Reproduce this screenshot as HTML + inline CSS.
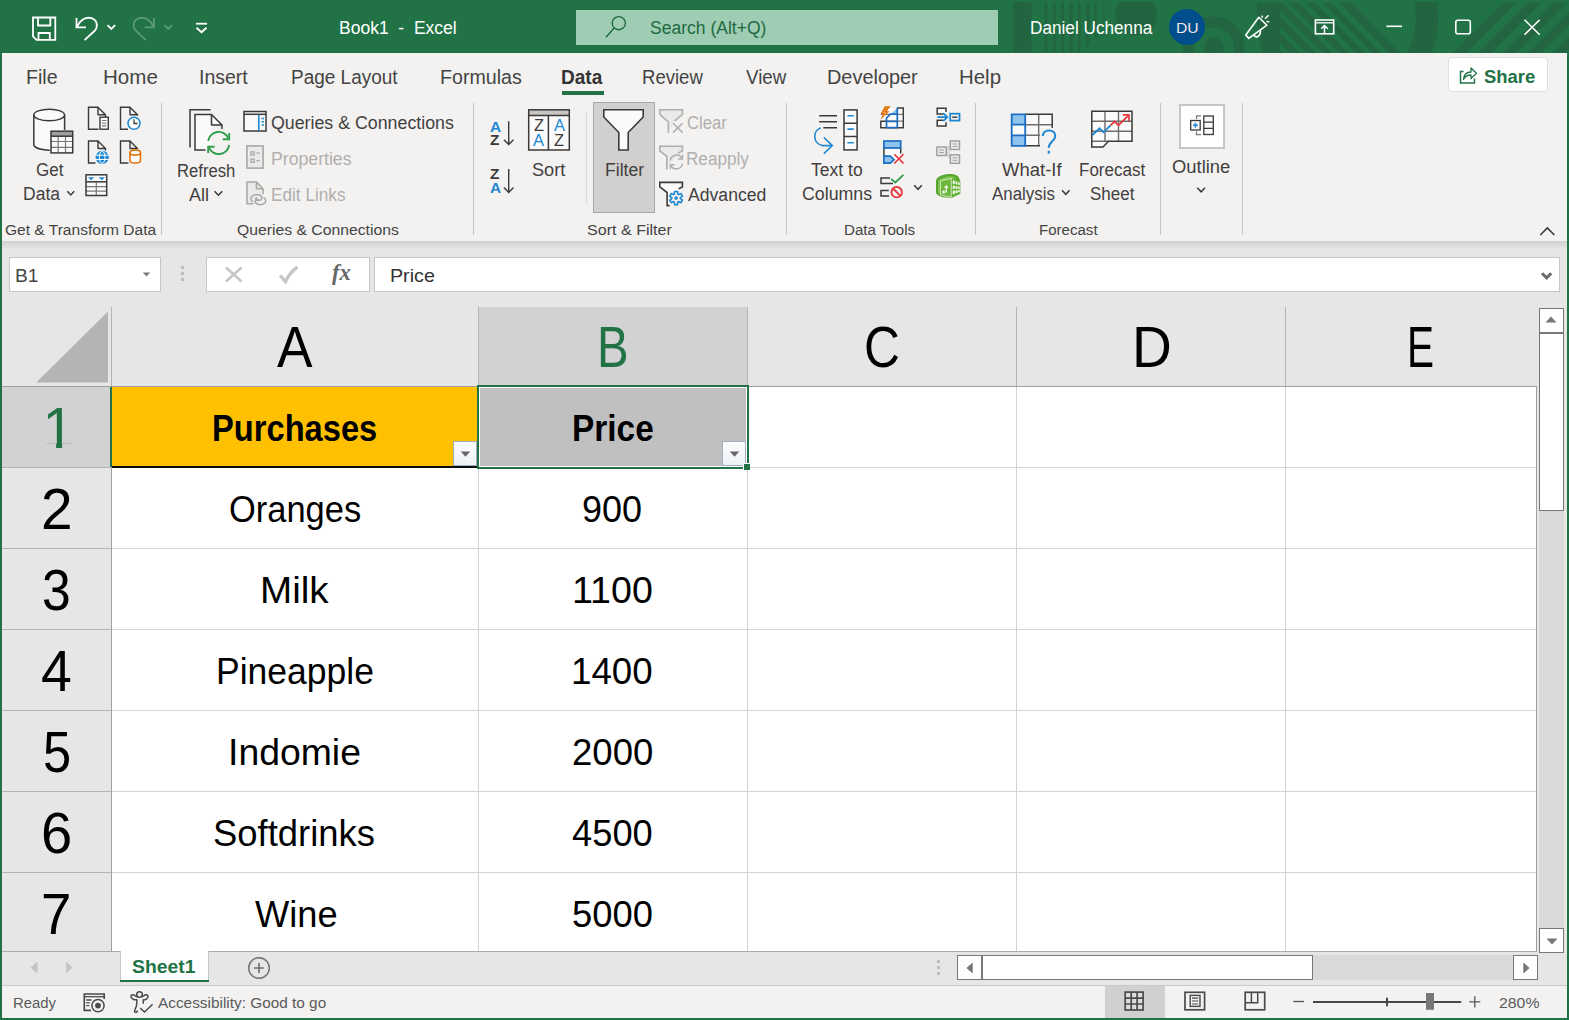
<!DOCTYPE html>
<html lang="en"><head><meta charset="utf-8"><title>Book1 - Excel</title>
<style>
html,body{margin:0;padding:0}
body{width:1569px;height:1020px;overflow:hidden;position:relative;background:#e6e6e6;font-family:"Liberation Sans",sans-serif}
.a{position:absolute}
.t{position:absolute;white-space:pre;line-height:1;transform-origin:0 0;display:block}
svg{position:absolute;overflow:visible}
#win{left:0;top:0;width:1569px;height:1020px;background:#217346}
#title{left:0;top:0;width:1569px;height:53px;background:#217346;overflow:hidden}
#tabs{left:2px;top:53px;width:1565px;height:47px;background:#f3f2f1}
#ribbon{left:2px;top:100px;width:1565px;height:141px;background:#f3f2f1}
#rshadow{left:2px;top:241px;width:1565px;height:8px;background:linear-gradient(#d0d0d0,#e6e6e6)}
#fbar{left:2px;top:249px;width:1565px;height:58px;background:#e6e6e6}
.box{position:absolute;background:#fff;border:1px solid #c6c6c6;box-sizing:border-box}
.sep{position:absolute;width:1px;background:#c8c6c4;top:103px;height:132px}
#grid{left:2px;top:307px;width:1535px;height:644px;background:#fff;overflow:hidden}
.ch{position:absolute;top:0;height:79px;background:#e6e6e6;box-sizing:border-box;border-right:1px solid #b8b8b8}
.rh{position:absolute;left:0;width:109px;background:#e6e6e6;box-sizing:border-box;border-bottom:1px solid #b8b8b8}
.vl{position:absolute;width:1px;background:#d4d4d4;top:80px;height:564px}
.hl{position:absolute;height:1px;background:#d4d4d4;left:110px;width:1425px}
</style></head><body>
<div id="win" class="a"></div>

<div id="title" class="a">
<svg width="1569" height="53" viewBox="0 0 1569 53" style="left:0;top:0">
<g fill="#236540">
<rect x="1013.300" y="2" width="18.200" height="50"/>
<rect x="1044.700" y="2" width="2.600" height="50"/><rect x="1053" y="2" width="2.600" height="50"/><rect x="1061.300" y="2" width="2.600" height="50"/><rect x="1069.600" y="2" width="3.200" height="50"/><rect x="1077.900" y="2" width="2.600" height="50"/><path d="M1086.200 3 h3.300 v39 l-3.300 6 z"/><rect x="1094.400" y="2" width="2.600" height="37"/><rect x="1102.700" y="2" width="1.800" height="20" opacity="0.6"/>
<circle cx="1136" cy="14.500" r="21"/>
<circle cx="1213.800" cy="47.600" r="10"/>
<path d="M1414.500 2 H1437.600 Q1441 30 1432 53 H1407 Q1419 30 1414.500 2 Z"/>
</g>
<g fill="none" stroke="#236540">
<circle cx="1213.800" cy="47.600" r="25.600" stroke-width="10.800"/>

</g>
<clipPath id="cpx"><rect x="1280" y="0" width="300" height="53"/></clipPath>
<path d="M1257 3 H1352 L1400 53 H1263 Q1255 28 1257 3 Z" fill="#236540"/>
<path d="M1232.7 3 H1240.2 L1290.2 53 H1282.7 Z M1249.2 3 H1256.7 L1306.7 53 H1299.2 Z M1265.7 3 H1273.2 L1323.2 53 H1315.7 Z M1282.2 3 H1289.7 L1339.7 53 H1332.2 Z M1298.7 3 H1306.2 L1356.2 53 H1348.7 Z M1315.2 3 H1322.7 L1372.7 53 H1365.2 Z M1331.7 3 H1339.2 L1389.2 53 H1381.7 Z " fill="#217346" clip-path="url(#cpx)"/>
<path d="M1453 53 H1466 L1516 3 H1503 Z M1478 53 H1491 L1541 3 H1528 Z M1503 53 H1516 L1566 3 H1553 Z M1528 53 H1541 L1591 3 H1578 Z M1553 53 H1566 L1616 3 H1603 Z " fill="#236540"/>
<rect x="0" y="0" width="1569" height="2" fill="#217346"/>
</svg>
<svg width="260" height="53" viewBox="0 0 260 53" style="left:0;top:0" fill="none" stroke="#fff" stroke-width="1.8">
<path d="M33 17.5 H55.3 V39.8 H36.5 L33 36.3 Z"/><path d="M38 17.5 V25.5 H50.3 V17.5"/><path d="M38.5 39.8 V33 H49.8 V39.8"/>
<path d="M76.5 18 V27.3 H86"/><path d="M77 27 C80 20 86 16.5 91.5 18.2 C97 20 98.5 26 95 30.5 L84.5 40.2" stroke-linejoin="round"/>
<path d="M107.5 25.2 L111.3 29 L115.1 25.2"/>
<g stroke="#5a9a76"><path d="M154 18 V27.3 H144.5"/><path d="M153.5 27 C150.5 20 144.5 16.5 139 18.2 C133.5 20 132 26 135.500 30.5 L146 40.2"/>
<path d="M164.5 25.200 L168.3 29 L172.1 25.2"/></g>
<path d="M196 23.7 H207"/><path d="M196.500 27.8 L201.5 32.2 L206.5 27.8"/>
</svg>
<span class="t " style="left:339.40px;top:19.00px;font-size:18px;color:#fff;transform:scaleX(0.9726);">Book1  -  Excel</span>
<div class="a" style="left:576px;top:10px;width:422px;height:35px;background:#9fcdb3"></div>
<svg width="30" height="30" viewBox="0 0 30 30" style="left:603px;top:12px" fill="none" stroke="#1e6a41" stroke-width="1.400"><circle cx="15.800" cy="11.200" r="6.600"/><path d="M11.200 16 L3 25.300"/></svg>
<span class="t " style="left:649.71px;top:19.00px;font-size:18px;color:#1e6a41;transform:scaleX(0.9734);">Search (Alt+Q)</span>
<span class="t " style="left:1030.13px;top:19.00px;font-size:18px;color:#fff;transform:scaleX(0.9544);">Daniel Uchenna</span>
<div class="a" style="left:1169px;top:9px;width:36px;height:36px;border-radius:50%;background:#004e8c"></div>
<span class="t " style="left:1175.75px;top:20.50px;font-size:14.5px;color:#f3e4e4;transform:scaleX(1.0799);">DU</span>
<svg width="330" height="53" viewBox="1240 0 330 53" style="left:1240px;top:0" fill="none" stroke="#fff" stroke-width="1.6">
<path d="M1258.800 17.300 L1245.800 35 L1248.800 38.400 L1266.900 25.200 Z" stroke-linejoin="round"/><path d="M1254 34.600 C1254.500 38.300 1260.500 38 1260.500 30"/>
<path d="M1261.800 15.600 L1262.600 17.600 M1265 18.800 L1268.700 15.300 M1266.500 21.600 L1269.300 21.700" stroke-width="1.500"/>
<rect x="1315.400" y="20" width="18.300" height="13.800"/><path d="M1315.400 22.800 H1333.700" stroke-width="1.300"/><path d="M1324.500 33.500 V26 M1321.200 28.800 L1324.500 25.600 L1327.800 28.800" stroke-width="1.500"/>
<path d="M1386.4 26.300 H1402"/>
<rect x="1455.800" y="20.3" width="14.5" height="13.5" rx="2"/>
<path d="M1524.5 19.700 L1539.700 34.700 M1539.700 19.700 L1524.500 34.700"/>
</svg>
</div>
<div id="tabs" class="a"></div>
<span class="t " style="left:26.13px;top:67.00px;font-size:20px;color:#444;transform:scaleX(0.9782);">File</span>
<span class="t " style="left:103.06px;top:67.00px;font-size:20px;color:#444;transform:scaleX(1.0275);">Home</span>
<span class="t " style="left:198.94px;top:67.00px;font-size:20px;color:#444;transform:scaleX(0.9751);">Insert</span>
<span class="t " style="left:291.08px;top:67.00px;font-size:20px;color:#444;transform:scaleX(0.9494);">Page Layout</span>
<span class="t " style="left:439.93px;top:67.00px;font-size:20px;color:#444;transform:scaleX(0.9809);">Formulas</span>
<span class="t " style="left:642.12px;top:67.00px;font-size:20px;color:#444;transform:scaleX(0.9274);">Review</span>
<span class="t " style="left:745.65px;top:67.00px;font-size:20px;color:#444;transform:scaleX(0.9372);">View</span>
<span class="t " style="left:827.21px;top:67.00px;font-size:20px;color:#444;transform:scaleX(0.9950);">Developer</span>
<span class="t " style="left:959.27px;top:67.00px;font-size:20px;color:#444;transform:scaleX(1.0207);">Help</span>
<span class="t " style="left:561.36px;top:67.00px;font-size:20px;color:#333;transform:scaleX(0.9526);font-weight:bold;">Data</span>
<div class="a" style="left:562px;top:91px;width:42px;height:4px;background:#217346"></div>
<div class="a" style="left:1448px;top:57px;width:100px;height:35px;background:#fff;border:1px solid #e1dfdd;border-radius:4px;box-sizing:border-box"></div>
<svg width="20" height="20" viewBox="0 0 20 20" style="left:1458px;top:65px" fill="none" stroke="#217346" stroke-width="1.5"><path d="M5.5 6.500 H2.500 V18 H16.5 V13.5"/><path d="M5.5 14.500 C6 9.500 9 7 13 7 V3 L18.500 8.3 L13 13.500 V10 C9.500 10 7 11.500 5.5 14.500 Z" stroke-linejoin="round" stroke-width="1.3"/></svg>
<span class="t " style="left:1483.79px;top:66.70px;font-size:19px;color:#217346;transform:scaleX(0.9684);font-weight:bold;">Share</span>
<div id="ribbon" class="a"></div>
<div class="a" style="left:593px;top:102px;width:62px;height:111px;background:#d2d0ce;border:1px solid #a9a7a5;box-sizing:border-box"></div>
<div class="sep" style="left:161px"></div>
<div class="sep" style="left:473px"></div>
<div class="sep" style="left:786px"></div>
<div class="sep" style="left:975px"></div>
<div class="sep" style="left:1160px"></div>
<div class="sep" style="left:1242px"></div>
<div class="sep" style="left:586px;top:112px;height:91px;background:#dad8d6"></div>
<div class="a" style="left:1179px;top:104px;width:46px;height:45px;background:#fff;border:2px solid #c8c6c4;box-sizing:border-box"></div>
<svg width="1569" height="141" viewBox="0 100 1569 141" style="left:0;top:100px" fill="none" stroke="#3b3a39" stroke-width="1.5" stroke-linejoin="miter">
<g>
<path d="M33.8 115 V144.300 C33.800 147.500 40 150.300 49.200 150.300 L52 150.300 V131 H64.600 V115 Z" fill="#fafafa" stroke="none"/>
<ellipse cx="49.2" cy="115" rx="15.4" ry="5.8" fill="#fafafa"/>
<path d="M33.8 115 V144.300 C33.800 147.300 39.500 149.800 49.800 150.200"/><path d="M64.6 115 V130"/>
<rect x="51" y="131.2" width="21.7" height="21.7" fill="#fafafa" stroke="none"/>
<rect x="51" y="131.200" width="21.700" height="5" fill="#a19f9d" stroke="none"/>
<g stroke="#7a7876" stroke-width="1.2"><path d="M51 141.500 H72.700 M51 147.300 H72.700 M58.200 136.200 V152.900 M65.500 136.200 V152.900"/></g>
<rect x="51" y="131.2" width="21.7" height="21.7"/><path d="M51 136.200 H72.700"/>
</g>
<g stroke-width="1.4"><path d="M98.0 107.2 H88.5 V129.2 H98.5" /><path d="M98.0 107.2 V114.7 H105.5 Z" stroke-linejoin="round"/><path d="M105.5 114.7 V117"/>
<rect x="100" y="117.2" width="8.3" height="12" fill="#fafafa"/><path d="M102 120.500 H106.300 M102 123.200 H106.300 M102 125.900 H106.300" stroke="#7a7876" stroke-width="1.1"/></g>
<g stroke-width="1.4"><path d="M130.0 107.2 H120.5 V129.2 H128" /><path d="M130.0 107.2 V114.7 H137.5 Z" stroke-linejoin="round"/><path d="M137.5 114.7 V115.5"/>
<circle cx="134" cy="123.2" r="6" fill="#fff" stroke="#1e88d2" stroke-width="1.5"/><path d="M134 119.300 V123.500 H137.500" stroke-width="1.3"/></g>
<g stroke-width="1.4"><path d="M98.0 141 H88.5 V163 H95.5" /><path d="M98.0 141 V148.5 H105.5 Z" stroke-linejoin="round"/><path d="M105.5 148.5 V150.5"/>
<circle cx="102.2" cy="157.3" r="6.6" fill="#1e88d2" stroke="none"/><g stroke="#fff" stroke-width="1"><ellipse cx="102.2" cy="157.3" rx="2.8" ry="6"/><path d="M96 155.200 H108.400 M96 159.500 H108.400"/></g></g>
<g stroke-width="1.4"><path d="M130.0 141 H120.5 V163 H128.5" /><path d="M130.0 141 V148.5 H137.5 Z" stroke-linejoin="round"/><path d="M137.5 148.5 V148.5"/>
<path d="M130 152.500 V160.700 C130 163.700 140.500 163.700 140.500 160.700 V152.500" fill="#fafafa" stroke="#de6c00" stroke-width="1.5"/><ellipse cx="135.25" cy="152.5" rx="5.25" ry="2.6" fill="#fafafa" stroke="#de6c00" stroke-width="1.5"/></g>
<g><rect x="86" y="174.800" width="20.700" height="20.700" fill="#fafafa" stroke="none"/>
<path d="M86 186.600 H106.700 M86 191.100 H106.700 M96.300 181.800 V195.500" stroke="#7a7876" stroke-width="1.2"/>
<path d="M86 181.800 H106.700"/><rect x="86" y="174.800" width="20.700" height="20.700"/>
<path d="M88 177.200 H94.200 L91.100 180.300 Z M98.700 177.200 H104.900 L101.800 180.300 Z" fill="#1e88d2" stroke="none"/></g>
<path d="M67.3 191.3 L70.8 195 L74.3 191.3" stroke="#3b3a39" stroke-width="1.5"/>
<path d="M214.5 191.3 L218.4 195.3 L222.3 191.3" stroke="#3b3a39" stroke-width="1.5"/>
<path d="M914.2 185.3 L918.0 189.3 L921.8 185.3" stroke="#3b3a39" stroke-width="1.5"/>
<path d="M1062 190.3 L1065.8 194.3 L1069.6 190.3" stroke="#3b3a39" stroke-width="1.5"/>
<path d="M1197.3 187.8 L1201.15 191.8 L1205 187.8" stroke="#3b3a39" stroke-width="1.5"/>
<path d="M1540.300 235 L1547.300 228 L1554.300 235" stroke-width="1.6"/>
<g><path d="M210.500 109.700 H190 V147.500"/>
<path d="M211.500 114.500 H195 V150 H211" fill="#fafafa" stroke="none"/><path d="M211.500 114.500 H195 V150 H205.500"/>
<path d="M211.500 114.500 L222 125 V130" fill="#fafafa" stroke="none"/>
<path d="M211.500 114.500 V125 H222 Z" fill="#fafafa" stroke-linejoin="round"/><path d="M222 125 V129"/>
<g stroke="#2f9e4c" stroke-width="1.9"><path d="M208.200 141 A10.600 10.600 0 0 1 228.500 138.500"/><path d="M229.200 133 V139.300 H222.800"/>
<path d="M229.200 145 A10.600 10.600 0 0 1 208.900 147.500"/><path d="M208.200 153 V146.700 H214.600"/></g></g>
<g><rect x="244" y="111.500" width="22" height="19.500" fill="#fafafa" stroke="none"/><path d="M244 114.300 H266"/><rect x="244" y="111.500" width="22" height="19.500"/>
<path d="M258.800 114.800 V131" stroke="#1e88d2" stroke-width="1.6"/><path d="M261.500 118.500 H264 M261.500 121.700 H264 M261.500 124.900 H264" stroke="#1e88d2" stroke-width="1.5"/></g>
<g stroke="#aaa8a6" stroke-width="1.6"><rect x="246.900" y="145.900" width="16.200" height="22.200" fill="#ebeae9"/>
<rect x="250.900" y="151.900" width="3.300" height="3.100" stroke-width="1.300"/><rect x="250.900" y="159.200" width="3.300" height="3.100" stroke-width="1.300"/><path d="M256.400 153.100 H259.800 M256.400 160.600 H259.800" stroke-width="1.300"/></g>
<g stroke="#aaa8a6" stroke-width="1.6"><path d="M253.400 203.800 H247 V182 H256.500 L263 188.700 V194.200" fill="#ebeae9"/><path d="M256.500 182 V188.700 H263" stroke-linejoin="round"/>
<path d="M253 202 C248.500 199 252 193.500 258.500 194.800 C263 195.800 262.800 200.300 258.300 200.500 C255.800 200.500 255 198.500 257 197.500" stroke-width="1.500"/>
<path d="M263.500 197.300 C268.500 200.500 264.500 205.500 258.500 204.500 C254 203.500 254.300 199.500 258.500 199" stroke-width="1.500"/></g>
<path d="M508.7 121.2 V144.8 M503.9 139.8 L508.7 144.60000000000002 L513.5 139.8" stroke-width="1.4"/>
<path d="M508.7 169 V192.6 M503.9 187.6 L508.7 192.4 L513.5 187.6" stroke-width="1.4"/>
<g><rect x="528.700" y="109.800" width="40.600" height="40.200" fill="#fafafa" stroke="none"/><rect x="528.700" y="109.800" width="40.600" height="5.800" fill="#c8c6c4" stroke="none"/>
<path d="M528.700 115.600 H569.300 M548.400 115.600 V150"/><rect x="528.700" y="109.800" width="40.600" height="40.200"/></g>
<path d="M603.800 109.800 H643.200 V117 L628.200 132.500 V150 H618.800 V132.500 L603.800 117 Z" fill="#fafafa" stroke-width="1.6"/>
<path d="M674.5999999999999 120.8 L682.4 114.3 V109.8 H659.8 V114.3 L668.4 122.0 V133.0" stroke="#b0aeac" fill="#ebeae9" stroke-width="1.6"/>
<path d="M673 123.200 L682.600 132.600 M682.600 123.200 L673 132.600" stroke="#b0aeac" stroke-width="1.500"/>
<path d="M678.1999999999999 153.3 L682.4 150.8 V146.3 H659.8 V150.8 L666.8 156.5 V169.5" stroke="#b0aeac" fill="#ebeae9" stroke-width="1.6"/>
<g stroke="#b0aeac" stroke-width="1.500"><path d="M670.300 160.500 A6.200 6.200 0 0 1 682 158.500"/><path d="M682.500 154.500 V159 H678"/><path d="M682.500 163.500 A6.200 6.200 0 0 1 670.800 165.500"/><path d="M670.300 169 V164.800 H674.500"/></g>
<path d="M678.5 188.9 L682.4 186.9 V182.4 H659.8 V186.9 L667.1 192.5 V205.6 H669.7" stroke="#3b3a39" fill="#fafafa" stroke-width="1.6"/>
<circle cx="676.1" cy="198.1" r="7.600" fill="#f3f2f1" stroke="none"/>
<path d="M674.35 194.17 L674.59 191.57 L677.61 191.57 L677.85 194.17 L678.63 194.62 L681.00 193.53 L682.51 196.14 L680.38 197.65 L680.38 198.55 L682.51 200.06 L681.00 202.67 L678.63 201.58 L677.85 202.03 L677.61 204.63 L674.59 204.63 L674.35 202.03 L673.57 201.58 L671.20 202.67 L669.69 200.06 L671.82 198.55 L671.82 197.65 L669.69 196.14 L671.20 193.53 L673.57 194.62 Z" stroke="#1e88d2" stroke-width="1.600" stroke-linejoin="round" fill="#f3f2f1"/><circle cx="676.1" cy="198.1" r="1.800" fill="#1e88d2" stroke="none"/>
<g><path d="M819.200 115.800 H837 M819.200 121.800 H837 M823.300 127.800 H837" stroke-width="1.500"/>
<path d="M820.800 127.700 A9.300 9.300 0 0 0 822.600 145.600 H832" stroke="#1e88d2" stroke-width="1.600"/><path d="M823.900 137.500 L832.300 145.600 L823.900 153.700" stroke="#1e88d2" stroke-width="1.600"/>
<rect x="844" y="109.900" width="13.100" height="40" fill="#fafafa" stroke-width="1.500"/><path d="M844 123.200 H857.100 M844 136.500 H857.100" stroke-width="1.500"/>
<path d="M847.400 115.800 H853.800 M847.400 129.100 H853.800 M847.400 142.800 H853.800" stroke="#1e88d2" stroke-width="1.600"/></g>
<g stroke-width="1.4"><rect x="880.800" y="108" width="22.500" height="19.700" fill="#fafafa" stroke="none"/>
<path d="M880.800 114.300 H903.300 M886.500 121.200 H903.300" stroke="#7a7876" stroke-width="1.200"/>
<path d="M897.300 108 H903.300 V127.700 H880.800 V121.200 H886.500"/>
<path d="M890.600 114.200 L897.300 108 V114.200 Z" fill="#8ec3ee" stroke="none"/>
<path d="M897.300 107.500 V127.700 M897.300 114.200 H890.500 L886.500 118 V127.700 M886.500 121.300 H897.300 M886.500 127.700 H897.300" stroke="#1b6ec2" stroke-width="1.700"/>
<path d="M884.800 106.200 H890.400 L886.800 111.200 H889.500 L880.300 119.700 L883.200 113.700 H880.500 Z" fill="#de6c00" stroke="none"/>
<path d="M886.800 107.500 L883.200 112.400 H886 L883.200 116" stroke="#f5b26b" stroke-width="0.900"/></g>
<g><rect x="883.900" y="141" width="16.800" height="22" fill="#fafafa" stroke="none"/>
<path d="M883.900 148 V156 M900.700 148 V153.500" stroke-width="1.500"/>
<rect x="883.900" y="141" width="16.800" height="7" fill="#8ec3ee" stroke="#1b6ec2" stroke-width="1.700"/>
<path d="M883.900 156.200 H890.300 L894 159.700 L890.300 163.200 H883.900 Z" fill="#8ec3ee" stroke="#1b6ec2" stroke-width="1.700"/>
<path d="M894.300 154.200 L903.500 163.400 M903.500 154.200 L894.300 163.400" stroke="#e8383d" stroke-width="1.600"/></g>
<g stroke-width="1.500"><path d="M890 178 H881 V183.500 H893 M888.800 190.400 H881 V195.900 H889"/>
<path d="M891.200 178.800 L895.300 182.500 L903.400 174.800" stroke="#2f9e4c" stroke-width="1.800"/>
<circle cx="896.700" cy="192.200" r="5.200" stroke="#e8383d" stroke-width="1.900"/><path d="M893 188.500 L900.400 195.900" stroke="#e8383d" stroke-width="1.900"/></g>
<g stroke-width="1.500"><path d="M946 112 V108.300 H937.200 V114 H943.500 M943.500 120.300 H937.200 V126.100 H946 V122.300" fill="#fafafa"/>
<path d="M937.300 117.200 H947 M943.200 113.200 L947.300 117.200 L943.200 121.200" stroke="#1e88d2" stroke-width="1.800"/>
<rect x="950.200" y="113.700" width="9.300" height="6.900" stroke="#1e88d2" stroke-width="1.800"/><path d="M952.200 117.200 H957.400" stroke-width="1.400"/></g>
<g stroke="#a3a1a0" stroke-width="1.500" fill="#ebeae9"><path d="M946.300 149.500 L950 146 M946.300 153 L950 158.200" fill="none" stroke-width="1.300"/>
<path d="M946.300 149 L950 145.500 V158.800 L946.300 153.500 Z" fill="#dddbda" stroke="none"/>
<rect x="936.900" y="147" width="9.300" height="8.500"/><rect x="950.300" y="141" width="9.200" height="8.500"/><rect x="950.300" y="154.800" width="9.200" height="8.500"/>
<path d="M939.200 150 H943.900 M939.200 152.500 H943.900 M952.600 144 H957.200 M952.600 146.500 H957.200 M952.600 157.800 H957.200 M952.600 160.300 H957.200" stroke-width="1"/></g>
<g stroke="none"><path d="M936 180.800 C936 176.500 944 174 950 174 C954.500 174 957.800 175.500 958.800 177.500 L960.200 181 V193.800 L951.500 198 C944 198 936 196 936 192.300 Z" fill="#5aa531"/>
<path d="M938 181.300 C939 178.300 945 176.300 950 176.300 C953 176.300 955.500 177 956.500 178 L951.500 179.300 L940.500 181 V195 C939 194.300 938 193.300 938 192.300 Z" fill="#7cc24a"/>
<path d="M940.500 180.800 L951.300 178.300 V197.300 L940.500 195 Z" fill="#6bb83b" stroke="#e9f3df" stroke-width="0.800"/>
<path d="M952.200 178.500 L960.200 181.200 V193.800 L952.200 197.300 Z" fill="#6bb83b"/>
<g fill="#fff"><path d="M952.800 180.500 L954.800 181.100 V183.900 L952.800 183.500 Z M955.600 181.400 L957.400 182 V184.500 L955.600 184.100 Z M958.200 182.200 L959.700 182.700 V185 L958.200 184.700 Z"/>
<path d="M952.800 185.700 L954.800 186 V188.800 L952.800 188.700 Z M955.600 186.100 L957.400 186.400 V188.800 L955.600 188.800 Z M958.200 186.500 L959.700 186.700 V188.900 L958.200 188.800 Z"/>
<path d="M952.800 190.700 L954.800 190.500 V193.400 L952.800 193.900 Z M955.600 190.400 L957.400 190.300 V192.800 L955.600 193.200 Z M958.200 190.200 L959.700 190 V192.100 L958.200 192.500 Z"/></g>
<path d="M942.800 192 H946.300 V186 M944.600 187.800 L946.300 185.900 L948 187.800 M944.400 190.300 L942.600 192 L944.400 193.700" stroke="#fff" stroke-width="1.100" fill="none"/></g>
<g><rect x="1011.700" y="114.300" width="40.500" height="31.500" fill="#fafafa" stroke="none"/>
<rect x="1011.700" y="114.300" width="13.500" height="10" fill="#8ec3ee" stroke="none"/><rect x="1011.700" y="135.500" width="13.500" height="10.300" fill="#8ec3ee" stroke="none"/>
<path d="M1025.200 124.700 H1052.200 M1025.200 135.300 H1044 M1038.700 114.300 V145.800" stroke="#6e6c6a" stroke-width="1.400"/>
<path d="M1025.200 114.300 H1052.200 V128 M1025.200 145.800 H1043"/>
<path d="M1025.200 114.300 H1011.700 V145.800 H1025.200 Z M1011.700 124.700 H1025.200 M1011.700 135.300 H1025.200" stroke="#1b6ec2" stroke-width="1.800"/>
<rect x="1040" y="128" width="17.500" height="26.500" fill="#f3f2f1" stroke="none"/>
<path d="M1042.800 136 C1042.800 128.600 1055.300 128.600 1055.300 136 C1055.300 141.500 1048.800 141 1048.800 147.800" stroke="#1e88d2" stroke-width="2.100"/><path d="M1048.800 150.800 V153.600" stroke="#1e88d2" stroke-width="2.300"/></g>
<g><path d="M1091.800 111.300 H1132 V141.300 H1108.500 L1103 147 H1091.800 Z" fill="#fafafa" stroke="none"/>
<path d="M1105 111.300 V141.300 M1118.500 111.300 V141.300 M1091.800 121.300 H1132 M1091.800 131.300 H1132 M1091.800 141.300 H1108.500" stroke="#6e6c6a" stroke-width="1.400"/>
<path d="M1091.800 111.300 H1132 V141.300 H1108.500 L1103 147 H1091.800 Z"/>
<path d="M1092.500 135 L1099.500 128.300 L1103.500 132.300 L1110.500 125.300" stroke="#1e88d2" stroke-width="1.800"/>
<path d="M1110.500 125.300 L1114.500 121.500 L1118.500 125.300 L1128.500 115.300" stroke="#e8383d" stroke-width="1.800"/><path d="M1122.800 114.800 H1129 V121" stroke="#e8383d" stroke-width="1.700"/></g>
<g stroke-width="1.300"><rect x="1203.800" y="116" width="9.500" height="18.500" fill="#fafafa"/><path d="M1203.800 122.200 H1213.300 M1203.800 128.400 H1213.300"/>
<path d="M1201 115.800 H1196.500 V119 M1196.500 131.500 V134.700 H1201" stroke="#7a7876"/>
<rect x="1190.700" y="120.500" width="9.500" height="9.500" fill="#fafafa"/><path d="M1193 125.250 H1197.900 M1195.450 122.800 V127.700" stroke="#1e88d2" stroke-width="1.500"/></g>
</svg>
<span class="t " style="left:35.65px;top:161.00px;font-size:18px;color:#42403f;transform:scaleX(0.9452);">Get</span>
<span class="t " style="left:22.60px;top:185.00px;font-size:18px;color:#42403f;transform:scaleX(0.9731);">Data</span>
<span class="t " style="left:176.67px;top:162.00px;font-size:18px;color:#42403f;transform:scaleX(0.9266);">Refresh</span>
<span class="t " style="left:188.50px;top:186.00px;font-size:18px;color:#42403f;transform:scaleX(1.0024);">All</span>
<span class="t " style="left:270.80px;top:114.00px;font-size:18px;color:#42403f;transform:scaleX(0.9878);">Queries &amp; Connections</span>
<span class="t " style="left:270.79px;top:150.00px;font-size:18px;color:#b1afad;transform:scaleX(0.9817);">Properties</span>
<span class="t " style="left:270.83px;top:186.00px;font-size:18px;color:#b1afad;transform:scaleX(0.9544);">Edit Links</span>
<span class="t " style="left:531.68px;top:161.00px;font-size:18px;color:#42403f;transform:scaleX(1.0098);">Sort</span>
<span class="t " style="left:604.59px;top:161.00px;font-size:18px;color:#42403f;transform:scaleX(0.9766);">Filter</span>
<span class="t " style="left:686.67px;top:114.00px;font-size:18px;color:#b1afad;transform:scaleX(0.9247);">Clear</span>
<span class="t " style="left:686.13px;top:150.00px;font-size:18px;color:#b1afad;transform:scaleX(0.9517);">Reapply</span>
<span class="t " style="left:687.50px;top:186.00px;font-size:18px;color:#42403f;transform:scaleX(0.9781);">Advanced</span>
<span class="t " style="left:810.85px;top:161.00px;font-size:18px;color:#42403f;transform:scaleX(0.9744);">Text to</span>
<span class="t " style="left:801.51px;top:185.00px;font-size:18px;color:#42403f;transform:scaleX(0.9873);">Columns</span>
<span class="t " style="left:1002.25px;top:161.00px;font-size:18px;color:#42403f;transform:scaleX(1.0275);">What-If</span>
<span class="t " style="left:991.80px;top:185.00px;font-size:18px;color:#42403f;transform:scaleX(0.9371);">Analysis</span>
<span class="t " style="left:1078.64px;top:161.00px;font-size:18px;color:#42403f;transform:scaleX(0.9447);">Forecast</span>
<span class="t " style="left:1089.74px;top:185.00px;font-size:18px;color:#42403f;transform:scaleX(0.9431);">Sheet</span>
<span class="t " style="left:1172.47px;top:158.00px;font-size:18px;color:#42403f;transform:scaleX(1.0227);">Outline</span>
<span class="t " style="left:4.82px;top:222.00px;font-size:15.5px;color:#444;transform:scaleX(1.0027);">Get &amp; Transform Data</span>
<span class="t " style="left:236.69px;top:222.00px;font-size:15.5px;color:#444;transform:scaleX(1.0156);">Queries &amp; Connections</span>
<span class="t " style="left:586.88px;top:222.00px;font-size:15.5px;color:#444;transform:scaleX(1.0375);">Sort &amp; Filter</span>
<span class="t " style="left:844.39px;top:222.00px;font-size:15.5px;color:#444;transform:scaleX(0.9749);">Data Tools</span>
<span class="t " style="left:1038.50px;top:222.00px;font-size:15.5px;color:#444;transform:scaleX(0.9716);">Forecast</span>
<span class="t " style="left:489.61px;top:119.50px;font-size:14px;color:#1e88d2;transform:scaleX(1.1046);font-weight:bold;">A</span>
<span class="t " style="left:490.08px;top:132.80px;font-size:14px;color:#3b3a39;transform:scaleX(1.0940);font-weight:bold;">Z</span>
<span class="t " style="left:490.08px;top:166.90px;font-size:14px;color:#3b3a39;transform:scaleX(1.0940);font-weight:bold;">Z</span>
<span class="t " style="left:489.61px;top:180.90px;font-size:14px;color:#1e88d2;transform:scaleX(1.1046);font-weight:bold;">A</span>
<span class="t " style="left:533.81px;top:117.60px;font-size:16px;color:#3b3a39;transform:scaleX(1.0227);">Z</span>
<span class="t " style="left:533.00px;top:133.20px;font-size:16px;color:#1e88d2;transform:scaleX(1.0338);">A</span>
<span class="t " style="left:553.70px;top:117.60px;font-size:16px;color:#1e88d2;transform:scaleX(1.0338);">A</span>
<span class="t " style="left:554.31px;top:133.20px;font-size:16px;color:#3b3a39;transform:scaleX(1.0227);">Z</span>
<div id="rshadow" class="a"></div>
<div id="fbar" class="a"></div>
<div class="box" style="left:9px;top:257px;width:152px;height:35px"></div>
<span class="t " style="left:15.47px;top:265.60px;font-size:19px;color:#444;transform:scaleX(1.0094);">B1</span>
<svg width="10" height="6" viewBox="0 0 10 6" style="left:142px;top:271.500px"><path d="M0.800 0.500 H8.200 L4.500 4.500 Z" fill="#777"/></svg>
<div class="a" style="left:181px;top:266px;width:3px;height:3px;background:#bdbdbd"></div>
<div class="a" style="left:181px;top:272px;width:3px;height:3px;background:#bdbdbd"></div>
<div class="a" style="left:181px;top:278px;width:3px;height:3px;background:#bdbdbd"></div>
<div class="box" style="left:206px;top:257px;width:164px;height:35px"></div>
<svg width="164" height="35" viewBox="206 257 164 35" style="left:206px;top:257px" fill="none">
<path d="M226 267.500 L241.500 281.500 M241.500 267.500 L226 281.500" stroke="#c6c6c6" stroke-width="2.700"/>
<path d="M280 275.500 L285.500 281.500 C289 274 292.500 270.500 297.500 266.800" stroke="#c6c6c6" stroke-width="3.300"/>
</svg>
<span class="t " style="left:332.40px;top:261.00px;font-size:23px;color:#666;transform:scaleX(0.9823);font-weight:bold;font-style:italic;font-family:'Liberation Serif',serif;">fx</span>
<div class="box" style="left:374px;top:257px;width:1186px;height:35px"></div>
<span class="t " style="left:390.43px;top:265.70px;font-size:19px;color:#333;transform:scaleX(1.0355);">Price</span>
<svg width="14" height="10" viewBox="0 0 14 10" style="left:1540px;top:271px"><path d="M2 2.200 L6.600 6.800 L11.200 2.200" fill="none" stroke="#6a6a6a" stroke-width="3"/></svg>
<div id="grid" class="a">
<div class="a" style="left:0;top:0;width:1535px;height:79px;background:#e6e6e6"></div>
<div class="a" style="left:476px;top:0;width:269px;height:79px;background:#d2d2d2"></div>
<div class="a" style="left:109px;top:0;width:1px;height:79px;background:#b4b4b4"></div>
<div class="a" style="left:476px;top:0;width:1px;height:79px;background:#b4b4b4"></div>
<div class="a" style="left:745px;top:0;width:1px;height:79px;background:#b4b4b4"></div>
<div class="a" style="left:1014px;top:0;width:1px;height:79px;background:#b4b4b4"></div>
<div class="a" style="left:1283px;top:0;width:1px;height:79px;background:#b4b4b4"></div>
<div class="a" style="left:0;top:79px;width:1535px;height:1px;background:#9f9f9f"></div>
<svg width="109" height="79" viewBox="0 0 109 79" style="left:0;top:0"><path d="M34.300 75.500 H106 V4.500 Z" fill="#b4b4b4"/></svg>
<div class="a" style="left:0;top:80px;width:109px;height:564px;background:#e6e6e6"></div>
<div class="a" style="left:0;top:80px;width:109px;height:80px;background:#d2d2d2"></div>
<div class="a" style="left:109px;top:80px;width:1px;height:564px;background:#9f9f9f"></div>
<div class="a" style="left:0;top:160px;width:109px;height:1px;background:#b4b4b4"></div>
<div class="hl" style="top:160px"></div>
<div class="a" style="left:0;top:241px;width:109px;height:1px;background:#b4b4b4"></div>
<div class="hl" style="top:241px"></div>
<div class="a" style="left:0;top:322px;width:109px;height:1px;background:#b4b4b4"></div>
<div class="hl" style="top:322px"></div>
<div class="a" style="left:0;top:403px;width:109px;height:1px;background:#b4b4b4"></div>
<div class="hl" style="top:403px"></div>
<div class="a" style="left:0;top:484px;width:109px;height:1px;background:#b4b4b4"></div>
<div class="hl" style="top:484px"></div>
<div class="a" style="left:0;top:565px;width:109px;height:1px;background:#b4b4b4"></div>
<div class="hl" style="top:565px"></div>
<div class="a" style="left:0;top:646px;width:109px;height:1px;background:#b4b4b4"></div>
<div class="hl" style="top:646px"></div>
<div class="vl" style="left:476px"></div>
<div class="vl" style="left:745px"></div>
<div class="vl" style="left:1014px"></div>
<div class="vl" style="left:1283px"></div>
<div class="a" style="left:1534px;top:79px;width:1px;height:565px;background:#9f9f9f"></div>
<div class="a" style="left:110px;top:80px;width:366px;height:79px;background:#ffc000;border-bottom:2px solid #0a0a0a"></div>
<div class="a" style="left:476px;top:80px;width:269px;height:80px;background:#c0c0c0"></div>
</div>
<div class="a" style="left:110px;top:387px;width:2px;height:80px;background:#217346"></div>
<div class="a" style="left:477px;top:385px;width:272px;height:84px;border:2px solid #217346;box-sizing:border-box"></div>
<div class="a" style="left:479px;top:387px;width:268px;height:80px;border:1px solid #fff;box-sizing:border-box"></div>
<div class="a" style="left:453px;top:441px;width:24px;height:25px;background:linear-gradient(#fefefe,#edf0f6);border:1px solid #a3adc2;box-sizing:border-box"></div>
<svg width="12" height="7" viewBox="0 0 12 7" style="left:460px;top:450.500px"><path d="M0.800 0.500 H10.200 L5.500 5.800 Z" fill="#666"/></svg>
<div class="a" style="left:722px;top:441px;width:24px;height:25px;background:linear-gradient(#fefefe,#edf0f6);border:1px solid #a3adc2;box-sizing:border-box"></div>
<svg width="12" height="7" viewBox="0 0 12 7" style="left:729px;top:450.500px"><path d="M0.800 0.500 H10.200 L5.500 5.800 Z" fill="#666"/></svg>
<div class="a" style="left:743px;top:463px;width:7px;height:7px;background:#fff"></div>
<div class="a" style="left:744px;top:464px;width:6px;height:6px;background:#217346"></div>
<span class="t " style="left:277.30px;top:319.00px;font-size:57px;color:#000;transform:scaleX(0.9339);">A</span>
<span class="t " style="left:864.31px;top:319.00px;font-size:57px;color:#000;transform:scaleX(0.8730);">C</span>
<span class="t " style="left:1131.79px;top:319.00px;font-size:57px;color:#000;transform:scaleX(0.9671);">D</span>
<span class="t " style="left:1406.86px;top:319.00px;font-size:57px;color:#000;transform:scaleX(0.7114);">E</span>
<span class="t " style="left:597.22px;top:319.00px;font-size:57px;color:#217346;transform:scaleX(0.8296);">B</span>
<span class="t " style="left:42.60px;top:400.00px;font-size:57px;color:#217346;transform:scaleX(1.0000);clip-path:polygon(0 0,100% 0,100% 43.7px,19.5px 43.7px,19.5px 57px,13.5px 57px,13.5px 43.7px,0 43.7px);">1</span>
<span class="t " style="left:41.16px;top:481.00px;font-size:57px;color:#000;transform:scaleX(0.9970);">2</span>
<span class="t " style="left:42.07px;top:562.00px;font-size:57px;color:#000;transform:scaleX(0.9049);">3</span>
<span class="t " style="left:40.75px;top:643.00px;font-size:57px;color:#000;transform:scaleX(0.9727);">4</span>
<span class="t " style="left:42.98px;top:724.00px;font-size:57px;color:#000;transform:scaleX(0.8864);">5</span>
<span class="t " style="left:41.19px;top:805.00px;font-size:57px;color:#000;transform:scaleX(0.9862);">6</span>
<span class="t " style="left:41.27px;top:886.00px;font-size:57px;color:#000;transform:scaleX(0.9587);">7</span>
<span class="t " style="left:212.28px;top:411.00px;font-size:36px;color:#000;transform:scaleX(0.9076);font-weight:bold;">Purchases</span>
<span class="t " style="left:572.43px;top:411.00px;font-size:36px;color:#000;transform:scaleX(0.9277);font-weight:bold;">Price</span>
<span class="t " style="left:229.45px;top:492.00px;font-size:36px;color:#000;transform:scaleX(0.9572);">Oranges</span>
<span class="t " style="left:582.38px;top:492.00px;font-size:36px;color:#000;transform:scaleX(0.9989);">900</span>
<span class="t " style="left:259.81px;top:573.00px;font-size:36px;color:#000;transform:scaleX(1.0719);">Milk</span>
<span class="t " style="left:572.18px;top:573.00px;font-size:36px;color:#000;transform:scaleX(1.0443);">1100</span>
<span class="t " style="left:216.16px;top:654.00px;font-size:36px;color:#000;transform:scaleX(0.9859);">Pineapple</span>
<span class="t " style="left:571.25px;top:654.00px;font-size:36px;color:#000;transform:scaleX(1.0203);">1400</span>
<span class="t " style="left:227.64px;top:735.00px;font-size:36px;color:#000;transform:scaleX(1.0381);">Indomie</span>
<span class="t " style="left:571.67px;top:735.00px;font-size:36px;color:#000;transform:scaleX(1.0148);">2000</span>
<span class="t " style="left:213.36px;top:816.00px;font-size:36px;color:#000;transform:scaleX(1.0113);">Softdrinks</span>
<span class="t " style="left:572.18px;top:816.00px;font-size:36px;color:#000;transform:scaleX(1.0083);">4500</span>
<span class="t " style="left:254.91px;top:897.00px;font-size:36px;color:#000;transform:scaleX(1.0078);">Wine</span>
<span class="t " style="left:572.05px;top:897.00px;font-size:36px;color:#000;transform:scaleX(1.0101);">5000</span>
<div class="a" style="left:2px;top:951px;width:1565px;height:35px;background:#e6e6e6"></div>
<div class="a" style="left:2px;top:951px;width:1535px;height:1px;background:#ababab"></div>
<div class="a" style="left:2px;top:985px;width:1565px;height:1px;background:#c9c9c9"></div>
<div class="a" style="left:1537px;top:307px;width:30px;height:644px;background:#e6e6e6"></div>
<div class="a" style="left:1539px;top:333px;width:25px;height:596px;background:#d9d9d9"></div>
<div class="a" style="left:1539px;top:308px;width:25px;height:25px;background:#fff;border:1px solid #777;box-sizing:border-box"></div>
<div class="a" style="left:1539px;top:333px;width:25px;height:178px;background:#fff;border:1px solid #777;box-sizing:border-box"></div>
<div class="a" style="left:1539px;top:928px;width:25px;height:25px;background:#fff;border:1px solid #777;box-sizing:border-box"></div>
<svg width="12" height="7" viewBox="0 0 12 7" style="left:1545px;top:316px"><path d="M0.500 6.500 H11.500 L6 0.500 Z" fill="#777"/></svg>
<svg width="12" height="7" viewBox="0 0 12 7" style="left:1545.500px;top:937.500px"><path d="M0.500 0.500 H11.500 L6 6.500 Z" fill="#777"/></svg>
<div class="a" style="left:120px;top:951px;width:89px;height:29px;background:#fff;border-left:1px solid #c6c6c6;border-right:1px solid #c6c6c6;box-sizing:border-box"></div>
<div class="a" style="left:120px;top:980px;width:89px;height:2px;background:#217346"></div>
<span class="t " style="left:132.07px;top:957.10px;font-size:19px;color:#217346;transform:scaleX(1.0184);font-weight:bold;">Sheet1</span>
<svg width="50" height="14" viewBox="0 0 50 14" style="left:29px;top:961px"><path d="M8.500 0.500 V12.500 L1.500 6.500 Z M37 0.500 V12.500 L43.500 6.500 Z" fill="#c4c4c4"/></svg>
<svg width="24" height="24" viewBox="0 0 24 24" style="left:247px;top:955.500px" fill="none" stroke="#6e6e6e" stroke-width="1.400"><circle cx="12" cy="12" r="10.300"/><path d="M7 12 H17 M12 7 V17" stroke-width="1.700"/></svg>
<div class="a" style="left:937px;top:960px;width:3px;height:3px;background:#bdbdbd"></div>
<div class="a" style="left:937px;top:966px;width:3px;height:3px;background:#bdbdbd"></div>
<div class="a" style="left:937px;top:972px;width:3px;height:3px;background:#bdbdbd"></div>
<div class="a" style="left:1313px;top:955px;width:200px;height:25px;background:#d9d9d9"></div>
<div class="a" style="left:957px;top:955px;width:25px;height:25px;background:#fff;border:1px solid #777;box-sizing:border-box"></div>
<div class="a" style="left:982px;top:955px;width:331px;height:25px;background:#fff;border:1px solid #777;box-sizing:border-box"></div>
<div class="a" style="left:1513px;top:955px;width:25px;height:25px;background:#fff;border:1px solid #777;box-sizing:border-box"></div>
<svg width="7" height="12" viewBox="0 0 7 12" style="left:965.500px;top:961.500px"><path d="M6.700 0.500 V11.500 L0.400 6 Z" fill="#777"/></svg>
<svg width="7" height="12" viewBox="0 0 7 12" style="left:1522.800px;top:961.500px"><path d="M0.300 0.500 V11.500 L6.600 6 Z" fill="#777"/></svg>
<div class="a" style="left:2px;top:986px;width:1565px;height:32px;background:#f3f2f1"></div>
<div class="a" style="left:1105px;top:986px;width:60px;height:32px;background:#d1d0cf"></div>
<span class="t " style="left:12.91px;top:995.00px;font-size:15.5px;color:#5a5a5a;transform:scaleX(0.9574);">Ready</span>
<span class="t " style="left:158.00px;top:995.00px;font-size:15.5px;color:#5a5a5a;transform:scaleX(0.9911);">Accessibility: Good to go</span>
<span class="t " style="left:1498.61px;top:995.00px;font-size:15.5px;color:#5a5a5a;transform:scaleX(1.0203);">280%</span>
<svg width="1569" height="31" viewBox="0 986 1569 31" style="left:0;top:986px" fill="none" stroke="#4a4a4a" stroke-width="1.500">
<path d="M91 1010.300 H84.300 V994 H104.200 V999" stroke-width="1.700"/><path d="M84.300 996.700 H104.200" stroke-width="1.300"/><path d="M86.300 1000 H91.500 M86.300 1002.800 H89.800 M86.300 1005.600 H89.300" stroke-width="1.300"/>
<circle cx="98" cy="1005.600" r="6.100" fill="#f3f2f1"/><circle cx="98" cy="1005.600" r="2.900" fill="#4a4a4a" stroke="none"/>
<g stroke-width="1.500" stroke-linecap="round" stroke-linejoin="round"><circle cx="139.500" cy="994.500" r="2.800"/>
<path d="M136.800 996.700 L135 995.600 C133.500 994.300 131 994.500 131 996.300 C131.300 998.500 134 999.800 136.800 999.800 V1003 C136.800 1006.500 135.300 1008.500 134.700 1010.500 C134 1012.800 137 1013 137.200 1011"/>
<path d="M142.200 996.700 L144 995.600 C145.500 994.300 148 994.500 148 996.300 C147.700 998.500 145.500 999.800 143.300 999.800 V1003.300"/>
<path d="M140.200 1008 L144.500 1012 L152.600 1004.200" stroke-linecap="butt" stroke-linejoin="miter"/></g>
<g stroke-width="1.700"><rect x="1125.200" y="992.100" width="17.900" height="17.900" fill="#dddcdb"/><path d="M1131.200 992.100 V1010 M1137.100 992.100 V1010 M1125.200 998.100 H1143.100 M1125.200 1004 H1143.100"/></g>
<g><rect x="1185" y="992.300" width="19.600" height="17.500" stroke-width="1.700"/><rect x="1190.200" y="995.400" width="9.800" height="11" stroke-width="1.400"/><path d="M1192 998.100 H1198.200 M1192 1001 H1198.200 M1192 1004 H1198.200" stroke-width="1.200"/></g>
<g stroke-width="1.700"><rect x="1245.200" y="992.300" width="19.500" height="17.500"/><path d="M1245.200 1002.700 H1257.700 V992.300 M1251.400 992.300 V1002.700" stroke-width="1.500"/></g>
<path d="M1293.200 1001.500 H1304" stroke-width="1.300" stroke="#555"/><path d="M1469.300 1001.800 H1480.300 M1474.800 996.200 V1007.400" stroke-width="1.300" stroke="#555"/>
<path d="M1313 1002 H1461.200" stroke-width="2" stroke="#484848"/><path d="M1387 997.700 V1006.200" stroke-width="2" stroke="#484848"/>
<rect x="1426" y="993" width="8" height="16.800" fill="#777" stroke="none"/>
</svg>
</body></html>
